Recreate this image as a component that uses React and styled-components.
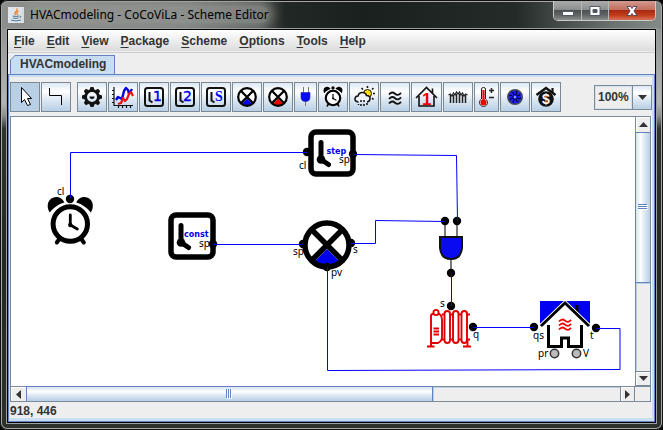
import React from 'react';
import styled, { createGlobalStyle, css } from 'styled-components';

const blue = '#6382bf';
const pale = '#c8ddf2';
const steel = '#7a8a99';
const panel = '#eeeeee';

const GlobalStyle = createGlobalStyle`
  * { box-sizing: border-box; }
  html, body { margin: 0; background: #000; }
  body, button, select { font: bold 12px/15px "Liberation Sans", Arial, sans-serif; color: #333; }
  button, select { margin: 0; padding: 0; border: 0; border-radius: 0; }
  svg { display: block; }
`;

const Window = styled.div`
  display: flex;
  flex-direction: column;
  min-height: 100vh;
  padding: 0 6px 6px;
  border-radius: 7px;
  background:
    linear-gradient(90deg, #8d8f8c 0, #7c7f7b 28%, #565a57 39%, #222825 43%, #1a201e 55%, #252b29 78%, #6a706d 92%, #858b89 100%) 0 0 / 100% 29px no-repeat,
    linear-gradient(#858988 0, #b4b6b6 24%, #8a8c8b 27%, #30342f 30%, #232821 60%, #2d312b 100%);
  box-shadow: inset 0 0 0 1px #111, inset 0 0 0 2px #a3a7a5;
`;

const TitleBar = styled.header`
  display: flex;
  align-items: flex-start;
  gap: 6px;
  height: 28px;
  padding: 0 1px 0 2px;
`;

const AppIcon = styled.svg`
  margin-top: 7px;
`;

const Title = styled.h1`
  flex: 1;
  margin: 7px 0 0;
  font: 12px/16px "Noto Sans", sans-serif;
  color: #000;
  white-space: nowrap;
  span {
    border-radius: 8px;
    background: rgba(150, 153, 150, 0.6);
    box-shadow: 0 0 10px 4px rgba(150, 153, 150, 0.6);
  }
`;

const Captions = styled.div`
  display: flex;
  height: 20px;
  margin-top: 1px;
  border: 1px solid #c8cbca;
  border-top: 0;
  border-radius: 0 0 5px 5px;
  overflow: hidden;
`;

const CaptionButton = styled.button`
  display: grid;
  place-items: center;
  width: ${(p) => (p.$close ? 47 : 27)}px;
  border-left: ${(p) => (p.$first ? 0 : '1px solid #b5b9b8')};
  background: ${(p) =>
    p.$close
      ? 'linear-gradient(#d2998e 0, #c2705f 45%, #a82a12 50%, #c23c1c 75%, #d8735a 100%)'
      : 'linear-gradient(#a9acab 0, #8b8f8e 45%, #4d5251 50%, #626766 75%, #8b908f 100%)'};
`;

const Body = styled.main`
  flex: 1;
  display: flex;
  flex-direction: column;
  margin: 1px;
  border: 1px solid #000;
  background: ${panel};
  box-shadow: 0 0 0 1px #9aa09d;
`;

const MenuBar = styled.nav`
  display: flex;
  gap: 12px;
  height: 23px;
  padding: 3px 6px 0;
  border-bottom: 1px solid #cccccc;
  background: linear-gradient(#fff, #dadada);
  box-shadow: inset 0 -1px #ededed;
`;

const MenuItem = styled.button`
  height: 16px;
  background: none;
  span { text-decoration: underline; text-underline-offset: 2px; }
`;

const TabStrip = styled.div`
  display: flex;
  padding: 2px 2px 0;
`;

const Tab = styled.button`
  position: relative;
  height: 19px;
  padding: 0 9px 0 10px;
  background: ${blue};
  clip-path: polygon(5px 0, 100% 0, 100% 100%, 0 100%, 0 5px);
  &::before {
    content: '';
    position: absolute;
    inset: 1px 1px 0;
    background: ${pale};
    clip-path: polygon(4px 0, 100% 0, 100% 100%, 0 100%, 0 4px);
  }
  span { position: relative; }
`;

const Pane = styled.section`
  flex: 1;
  display: flex;
  flex-direction: column;
  padding: 2px 2px 3px 1px;
  border: 1px solid ${blue};
  background: ${pale};
`;

const PaneContent = styled.div`
  flex: 1;
  display: flex;
  flex-direction: column;
  background: ${panel};
`;

const Toolbar = styled.div`
  display: flex;
  align-items: center;
  gap: 1px;
  padding: 5px 0 4px;
`;

const Gap = styled.div`
  width: ${(p) => (p.$grow ? 'auto' : '4px')};
  flex: ${(p) => (p.$grow ? 1 : 'none')};
`;

const ocean = css`
  background: linear-gradient(#dde8f3 0, #fff 30%, #dde8f3 60%, #b8cfe5 100%);
`;

const ToolButton = styled.button`
  width: ${(p) => p.$width || 30}px;
  height: 30px;
  border: 1px solid ${steel};
  ${ocean}
  ${(p) => p.$selected && 'background: #b8cfe5;'}
`;

const Zoom = styled.label`
  display: flex;
  width: 58px;
  height: 25px;
  border: 1px solid ${steel};
`;

const ZoomSelect = styled.select`
  flex: 1;
  min-width: 0;
  padding: 0 2px;
  appearance: none;
  background: ${panel};
  border: 1px solid #d5e0ec;
`;

const ZoomArrow = styled.span`
  display: grid;
  place-items: center;
  width: 19px;
  border-left: 1px solid ${steel};
  ${ocean}
`;

const ScrollPane = styled.div`
  flex: 1;
  display: grid;
  grid-template: minmax(269px, 1fr) 15px / minmax(0, 1fr) 15px;
  margin-right: 1px;
  border: 1px solid ${steel};
  box-shadow: 1px 0 #fff;
`;

const Viewport = styled.div`
  overflow: hidden;
  background: #fff;
`;

const ScrollBar = styled.div`
  display: flex;
  flex-direction: ${(p) => (p.$vertical ? 'column' : 'row')};
  border: 0 solid ${steel};
  border-width: ${(p) => (p.$vertical ? '0 0 0 1px' : '1px 0 0')};
  background: ${panel};
`;

const ScrollButton = styled.button`
  display: grid;
  place-items: center;
  flex: none;
  width: ${(p) => (p.$vertical ? 'auto' : '15px')};
  height: ${(p) => (p.$vertical ? '15px' : 'auto')};
  background: ${panel};
  box-shadow: inset 1px 1px #fff;
  border: 0 solid ${steel};
  ${(p) => p.$end && (p.$vertical ? 'border-width: 1px 0;' : 'border-width: 0 1px;')}
`;

const Thumb = styled.div`
  display: grid;
  place-items: center;
  flex: ${(p) => p.$share} 1 0;
  border: 0 solid ${blue};
  border-width: ${(p) => (p.$vertical ? '1px 0' : '0 1px')};
  background: linear-gradient(${(p) => (p.$vertical ? '90deg' : '180deg')}, #d5e3f1 0, #fff 33%, #dde8f3 60%, #b8cfe5 100%);
  box-shadow: ${(p) => (p.$vertical ? '-1px 0' : '0 -1px')} ${blue};
`;

const Track = styled.div`
  flex: ${(p) => p.$share} 1 0;
  box-shadow: inset 1px 1px #b8cfe5;
`;

const Corner = styled.div`
  border-top: 1px solid ${steel};
`;

const Status = styled.footer`
  height: 16px;
  padding-top: 1px;
  line-height: 16px;
`;

const PortLabel = styled.text`
  font: 10px "Noto Sans", sans-serif;
  fill: #000;
`;

const BlockLabel = styled.text`
  font: bold 8px "DejaVu Sans", sans-serif;
  fill: #0000f0;
`;

const IconText = styled.text`
  font: ${(p) => p.$font};
  fill: ${(p) => p.$color};
`;

const Arrow = ({ dir }) => {
  const turn = { up: 180, down: 0, left: 90, right: -90 }[dir];
  return (
    <svg width="9" height="9" viewBox="-4.5 -4.5 9 9">
      <path d="M-4.5 -2.5H4.5L0 2.5Z" fill="#333" transform={`rotate(${turn})`} />
    </svg>
  );
};

/* ---- shared drawings ---- */

const AlarmClock = () => (
  <g stroke="#000" fill="none" strokeLinecap="round">
    <path d="M-20.5-11.5C-25-18-22-27-14-27C-10-27-7-24.5-6-21.5C-12-20-17-16-20.5-11.5Z" fill="#000" stroke="none" />
    <path d="M20.5-11.5C25-18 22-27 14-27C10-27 7-24.5 6-21.5C12-20 17-16 20.5-11.5Z" fill="#000" stroke="none" />
    <circle r="17.2" fill="#fff" strokeWidth="5" />
    <path d="M-11 15L-13.5 18.5M11 15L13.5 18.5" strokeWidth="4" />
    <path d="M0-9V1L7 5" strokeWidth="2.8" />
    <circle cy="1" r="2.2" fill="#000" stroke="none" />
  </g>
);

const Comparator = ({ color }) => (
  <g>
    <circle r="22" fill="#fff" />
    <path d="M0 4L12 16Q7 21 0 21Q-7 21-12 16Z" fill={color} />
    <path d="M-15.5-15.5L15.5 15.5M15.5-15.5L-15.5 15.5" stroke="#000" strokeWidth="5.5" />
    <circle r="22" fill="none" stroke="#000" strokeWidth="5.5" />
  </g>
);

const TimerBlock = ({ x, y, label, labelX }) => (
  <g transform={`translate(${x} ${y})`} strokeLinecap="round">
    <rect x="2.5" y="2.500" width="42" height="42" rx="5" fill="#fff" stroke="#000" strokeWidth="5.5" />
    <path d="M12.5 13V30" stroke="#000" strokeWidth="5" />
    <path d="M12.5 30L20 35" stroke="#000" strokeWidth="5" />
    <circle cx="12.5" cy="30" r="4.3" />
    <BlockLabel x={labelX} y="24">{label}</BlockLabel>
  </g>
);

const Wave = ({ x, y, w }) => (
  <path d={`M${x} ${y + 1}q${w / 4}-3.5 ${w / 2}-.8t${w / 2}-.8`} />
);

const Radiator = () => (
  <g stroke="#e00000" fill="none" strokeWidth="1.9">
    <path d="M431 345.500V316Q431 314 433 314H439Q442 315 442 320V337Q442 341 438 343H431M427 346.500H434.5" />
    <circle cx="436" cy="312.5" r="2.6" fill="#fff" />
    <path d="M442 314.5H445M450 314.5H453M458 314.5H461M466 314.5H470M442 339.500H445M450 339.500H453M458 339.500H461M466 339.500H470" />
    <rect x="444.5" y="311" width="5.5" height="32" rx="2.7" />
    <rect x="453" y="311" width="5.5" height="32" rx="2.7" />
    <rect x="461.5" y="311" width="5.5" height="32" rx="2.7" />
    <path d="M467.5 340V346M463 346.500H471" />
    <path d="M433.5 328.500H439M433.5 331.500H439M433.5 334.500H439" strokeWidth="1.8" />
  </g>
);

const House = () => (
  <g fill="none" stroke="#000">
    <rect x="540" y="301" width="50" height="25" fill="#0000f0" stroke="none" />
    <path d="M541 328L565 305L589 328Z" fill="#fff" stroke="#fff" strokeWidth="3" />
    <path d="M577 305V313" strokeWidth="3" />
    <path d="M541 326L565 303L589 326" stroke="#fff" strokeWidth="4.6" />
    <path d="M541 326L565 303L589 326" strokeWidth="2.8" />
    <path d="M548.500 325V346.500H561.500V338H568.5V346.500H581.5V325" strokeWidth="3" />
    <g stroke="#f00000" strokeWidth="1.8">
      <Wave x={559} y={320.5} w={12} />
      <Wave x={559} y={324.5} w={12} />
      <Wave x={559} y={328.5} w={12} />
    </g>
  </g>
);

const wires = [
  'M70.5 198V152.5H307',
  'M354 154.5L456.5 155.5L457.5 221',
  'M213 244.5H303',
  'M351 243.5H375.5V220.5L445 221.5',
  'M327.5 267V370.5L620 369.5V328.5H596',
  'M451.5 273V306',
  'M473 327.5H534',
];

const ports = [
  [70, 199, 'cl', 57, 195], [307, 152, 'cl', 299, 169], [353, 154, 'sp', 339, 163],
  [213, 244, 'sp', 199, 247], [303, 244, 'sp', 293, 255], [351, 243, 's', 353, 253],
  [327, 267, 'pv', 331, 276], [445, 221], [457, 221], [451, 273],
  [451, 306, 's', 440, 307], [473, 327, 'q', 473, 338], [534, 327, 'qs', 533, 339],
  [596, 328, 't', 590, 339],
];

const Scheme = () => (
  <svg width="625" height="269" viewBox="11 117 625 269" role="img" aria-label="HVAC scheme">
    <g transform="translate(70.3 224)"><AlarmClock /></g>
    <TimerBlock x={168.5} y={212.5} label="const" labelX={15.5} />
    <TimerBlock x={308.5} y={129.5} label="step" labelX={18} />
    <g transform="translate(327 245)"><Comparator color="#0000f0" /></g>
    <path d="M445 221V236M457 221V236M451 259V273" stroke="#444" strokeWidth="1.4" />
    <path d="M440 237H462V248Q461 259 451 259Q441 259 440 248Z" fill="#0a0af0" stroke="#111" strokeWidth="2" />
    <Radiator />
    <House />
    <g fill="#bbb" stroke="#333" strokeWidth="1.5">
      <circle cx="554.5" cy="353.5" r="4.2" />
      <circle cx="576.5" cy="353.5" r="4.2" />
    </g>
    <PortLabel x="538" y="357">pr</PortLabel>
    <PortLabel x="583" y="357">V</PortLabel>
    {ports.map(([x, y, label, lx, ly]) => (
      <g key={`${x}-${y}`}>
        <circle cx={x} cy={y} r="4.2" />
        {label && <PortLabel x={lx} y={ly}>{label}</PortLabel>}
      </g>
    ))}
    {wires.map((d) => <path key={d} d={d} fill="none" stroke="#0000ff" />)}
  </svg>
);

/* ---- toolbar icons, drawn on a 28px square ---- */

const TimerIcon = ({ children }) => (
  <g fill="none" stroke="#111">
    <rect x="5" y="5" width="18" height="18" rx="2.5" strokeWidth="2" />
    <path d="M9.5 9V17.5L12.5 19.5" strokeWidth="2" />
    <g stroke="none">{children}</g>
  </g>
);

const digitFont = '14px "DejaVu Sans", sans-serif';
const teeth = [0, 45, 90, 135, 180, 225, 270, 315];

const tools = [
  { name: 'Select', selected: true, art: <path d="M10.5 4.5V19.5L13.5 16.5L16.5 22.5L19.5 21.5L16.5 15.5H20.5Z" fill="#fff" stroke="#000" /> },
  { name: 'Connect', art: <path d="M7.5 5V12.5H19.5V22" fill="none" stroke="#000" /> },
  { gap: true },
  {
    name: 'Settings',
    art: (
      <g transform="translate(14 14)" fill="none" stroke="#111">
        {teeth.map((a) => <path key={a} d="M-2.5-7L-1.5-10H1.5L2.5-7Z" fill="#111" stroke="none" transform={`rotate(${a})`} />)}
        <circle r="6.4" strokeWidth="2.8" />
        <path d="M-2.5-.5A2.5 2.5 0 0 0 2.5-.5Z" fill="#111" stroke="none" />
      </g>
    ),
  },
  {
    name: 'Chart',
    art: (
      <g fill="none" strokeLinejoin="round">
        <path d="M5 4V22.5H24M3 7.500H5M3 11.5H5M3 15.5H5M3 19.5H5M9.5 23V25M13.5 23V25M17.5 23V25M21.5 23V25" stroke="#111" strokeWidth="1.2" />
        <path d="M7 17L9 14L11 15L13 16L15 8L17 5L19 7L20 11L23 6" stroke="#0000e0" strokeWidth="2.4" />
        <path d="M9 21L12 20L14 15L16 18L18 16L20 11L22 9L24 13" stroke="#f01010" strokeWidth="2.2" />
      </g>
    ),
  },
  { name: 'Timer 1', art: <TimerIcon><IconText x="13" y="18" $font={digitFont} $color="#0000e0" stroke="#0000e0" strokeWidth=".4">1</IconText></TimerIcon> },
  { name: 'Timer 2', art: <TimerIcon><IconText x="12" y="18" $font={digitFont} $color="#0000e0" stroke="#0000e0" strokeWidth=".4">2</IconText></TimerIcon> },
  { name: 'Step timer', art: <TimerIcon><IconText x="13" y="18" $font='bold 14px "Liberation Serif", serif' $color="#0000f0">S</IconText></TimerIcon> },
  { name: 'Cooling comparator', art: <g transform="translate(14 14) scale(.4)"><Comparator color="#0000f0" /></g> },
  { name: 'Heating comparator', art: <g transform="translate(14 14) scale(.4)"><Comparator color="#f00000" /></g> },
  {
    name: 'And gate',
    width: 23,
    art: (
      <g fill="none" stroke="#777">
        <path d="M8.5 4V10M13.5 4V10M10.5 18V23" />
        <path d="M6 9.5H15V14Q15 18.5 10.5 18.5Q6 18.5 6 14Z" fill="#0a0af0" stroke="#2222aa" strokeWidth=".6" />
      </g>
    ),
  },
  { name: 'Clock', art: <g transform="translate(14 15) scale(.42)"><AlarmClock /><circle cy="-24" r="4" /></g> },
  {
    name: 'Weather',
    art: (
      <g fill="none" stroke="#111" strokeWidth="1.5">
        <circle cx="17.5" cy="10.5" r="4" fill="#ffe000" strokeWidth="1" />
        <path d="M17.5 3V5M11.5 5L13 6.5M23.5 5L22 6.5M23 10.5H25M22 15L23.5 16.5" />
        <path d="M8 19Q4.5 18.5 5 15.5Q5.5 13 8 13Q9 9 13 9.5Q16 10 16.5 12.5Q20 12.5 20 15.5Q20 18.5 16.5 19Z" fill="#eef3f8" stroke="none" />
        <path d="M8.5 19Q4.5 18.5 5 15.5Q5.5 13 8 13Q9 9 13 9.5Q16 10 16.5 12.5Q20 12.5 20 15.5Q20 18.5 17 19" />
        <path d="M11 17V19M14 17V19M11 21V23M14 21V23M17 20V22M8.5 21V22" />
      </g>
    ),
  },
  {
    name: 'Heat flow',
    art: (
      <g fill="none" stroke="#111" strokeWidth="1.9">
        <Wave x={8} y={10.5} w={12} /><Wave x={8} y={15} w={12} /><Wave x={8} y={19.5} w={12} />
      </g>
    ),
  },
  {
    name: 'House 1',
    width: 31,
    art: (
      <g fill="none" stroke="#111" strokeWidth="1.6">
        <path d="M7 13V23H22V13" />
        <path d="M4 15L14.5 4.5L25 15M20.5 10V5.5" />
        <IconText x="10" y="22" $font='bold 17px "Liberation Sans", sans-serif' $color="#f00000" stroke="none">1</IconText>
      </g>
    ),
  },
  {
    name: 'Radiator',
    art: (
      <g fill="none" stroke="#222" strokeWidth="1.5">
        <path d="M6.5 20V12M9.5 20V12M12.5 20V11M15.5 20V11M18.5 20V12M21.5 20V12" />
        <path d="M4.500 12L6.5 11L8 13L9.500 10L11 12L12.5 9L14 11L15.5 9L17 12L18.5 10L20 13L21.5 11L23.500 12" strokeWidth="1.2" />
      </g>
    ),
  },
  {
    name: 'Thermostat',
    width: 25,
    art: (
      <g fill="none" stroke="#222">
        <path d="M6.5 16V6Q6.5 4.5 8.5 4.5Q10.5 4.5 10.5 6V16A4 4 0 1 1 6.5 16Z" fill="#fff" />
        <circle cx="8.5" cy="19.5" r="3" fill="#f00000" stroke="none" />
        <path d="M8.5 7V19" stroke="#f00000" strokeWidth="2.2" />
        <path d="M14 7.5H19M16.5 5V10M14 14.5H19" strokeWidth="1.5" />
      </g>
    ),
  },
  {
    name: 'Fan',
    art: (
      <g transform="translate(14 14)" fill="none">
        <circle r="7.2" fill="#2020f0" stroke="#444b58" strokeWidth="1.6" />
        {teeth.map((a) => <path key={a} d="M0-2Q3-4 1-6" stroke="#000040" strokeWidth="1.1" transform={`rotate(${a})`} />)}
        <circle r="1.2" fill="#8899ff" />
      </g>
    ),
  },
  {
    name: 'Energy cost',
    art: (
      <g fill="none" stroke="#111">
        <path d="M4.5 12L14 5L23.5 12" strokeWidth="2.6" />
        <path d="M20.5 5V9" strokeWidth="2.2" />
        <circle cx="14" cy="16" r="7.8" fill="#111" stroke="none" />
        <IconText x="10" y="21" $font='bold 14px "Liberation Sans", sans-serif' $color="#fff" stroke="none">$</IconText>
      </g>
    ),
  },
];

const menus = ['File', 'Edit', 'View', 'Package', 'Scheme', 'Options', 'Tools', 'Help'];

export default function App() {
  return (
    <Window>
      <GlobalStyle />
      <TitleBar>
        <AppIcon width="16" height="16" viewBox="0 0 16 16" aria-hidden="true">
          <rect width="16" height="16" fill="#dfe5ea" />
          <g fill="none">
            <path d="M8.5 1.5Q10 3.5 7.5 5Q6 6.5 8 8M10.5 4Q8.5 5 9 6.5L9.5 8" stroke="#e8761c" strokeWidth="1.2" />
            <path d="M4.5 9Q8 10 11 9M5 11Q8 12 10.5 11M3 13Q8 15 13 13M11.5 9Q14 9 12 11" stroke="#4a7896" />
          </g>
        </AppIcon>
        <Title><span>HVACmodeling - CoCoViLa - Scheme Editor</span></Title>
        <Captions>
          <CaptionButton $first aria-label="Minimize">
            <svg width="14" height="14"><rect x="1.5" y="7.5" width="11" height="4" fill="#fff" stroke="#555a6a" /></svg>
          </CaptionButton>
          <CaptionButton aria-label="Maximize">
            <svg width="14" height="14"><path d="M2 2.5H12V11.5H2ZM5 5.5H9V8.5H5Z" fill="#fff" fillRule="evenodd" stroke="#555a6a" /></svg>
          </CaptionButton>
          <CaptionButton $close aria-label="Close">
            <svg width="14" height="14">
              <path d="M2 2.5H5.5L7 4.5L8.5 2.5H12L9 7L12 11.5H8.5L7 9.5L5.5 11.5H2L5 7Z" fill="#fff" stroke="#55465a" />
            </svg>
          </CaptionButton>
        </Captions>
      </TitleBar>
      <Body>
        <MenuBar>
          {menus.map((m) => <MenuItem key={m}><span>{m[0]}</span>{m.slice(1)}</MenuItem>)}
        </MenuBar>
        <TabStrip role="tablist">
          <Tab role="tab" aria-selected="true"><span>HVACmodeling</span></Tab>
        </TabStrip>
        <Pane>
          <PaneContent>
            <Toolbar role="toolbar">
              {tools.map((t, i) => t.gap ? <Gap key={i} /> : (
                <ToolButton key={t.name} aria-label={t.name} $width={t.width} $selected={t.selected}>
                  <svg width={(t.width || 30) - 2} height="28">{t.art}</svg>
                </ToolButton>
              ))}
              <Gap $grow />
              <Zoom>
                <ZoomSelect aria-label="Zoom" defaultValue="100%">
                  <option>50%</option>
                  <option>100%</option>
                  <option>200%</option>
                </ZoomSelect>
                <ZoomArrow><Arrow dir="down" /></ZoomArrow>
              </Zoom>
            </Toolbar>
            <ScrollPane>
              <Viewport><Scheme /></Viewport>
              <ScrollBar $vertical>
                <ScrollButton $vertical aria-label="Scroll up"><Arrow dir="up" /></ScrollButton>
                <Thumb $vertical $share={150}>
                  <svg width="10" height="7"><path d="M0 .5H9M0 2.5H9M0 4.5H9" stroke={blue} /><path d="M1 1.5H10M1 3.5H10M1 5.5H10" stroke="#fff" /></svg>
                </Thumb>
                <Track $share={88} />
                <ScrollButton $vertical $end aria-label="Scroll down"><Arrow dir="down" /></ScrollButton>
              </ScrollBar>
              <ScrollBar>
                <ScrollButton aria-label="Scroll left"><Arrow dir="left" /></ScrollButton>
                <Thumb $share={406}>
                  <svg width="7" height="10"><path d="M.5 0V9M2.5 0V9M4.5 0V9" stroke={blue} /><path d="M1.5 1V10M3.5 1V10M5.5 1V10" stroke="#fff" /></svg>
                </Thumb>
                <Track $share={187} />
                <ScrollButton $end aria-label="Scroll right"><Arrow dir="right" /></ScrollButton>
              </ScrollBar>
              <Corner />
            </ScrollPane>
            <Status>918, 446</Status>
          </PaneContent>
        </Pane>
      </Body>
    </Window>
  );
}
